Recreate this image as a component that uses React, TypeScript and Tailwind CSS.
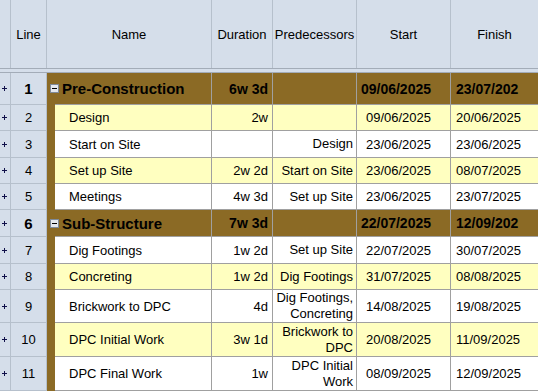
import React from "react";

type Row = {
  line: number;
  group?: boolean;
  name: string;
  dur: string;
  pred: string;
  start: string;
  finish: string;
  yellow?: boolean;
  h: string;
};

const rows: Row[] = [
  { line: 1, group: true, name: "Pre-Construction", dur: "6w 3d", pred: "", start: "09/06/2025", finish: "23/07/202", h: "h-[32px]" },
  { line: 2, name: "Design", dur: "2w", pred: "", start: "09/06/2025", finish: "20/06/2025", yellow: true, h: "h-[26px]" },
  { line: 3, name: "Start on Site", dur: "", pred: "Design", start: "23/06/2025", finish: "23/06/2025", h: "h-[27px]" },
  { line: 4, name: "Set up Site", dur: "2w 2d", pred: "Start on Site", start: "23/06/2025", finish: "08/07/2025", yellow: true, h: "h-[26px]" },
  { line: 5, name: "Meetings", dur: "4w 3d", pred: "Set up Site", start: "23/06/2025", finish: "23/07/2025", h: "h-[26px]" },
  { line: 6, group: true, name: "Sub-Structure", dur: "7w 3d", pred: "", start: "22/07/2025", finish: "12/09/202", h: "h-[27px]" },
  { line: 7, name: "Dig Footings", dur: "1w 2d", pred: "Set up Site", start: "22/07/2025", finish: "30/07/2025", h: "h-[27px]" },
  { line: 8, name: "Concreting", dur: "1w 2d", pred: "Dig Footings", start: "31/07/2025", finish: "08/08/2025", yellow: true, h: "h-[26px]" },
  { line: 9, name: "Brickwork to DPC", dur: "4d", pred: "Dig Footings, Concreting", start: "14/08/2025", finish: "19/08/2025", h: "h-[33px]" },
  { line: 10, name: "DPC Initial Work", dur: "3w 1d", pred: "Brickwork to DPC", start: "20/08/2025", finish: "11/09/2025", yellow: true, h: "h-[34px]" },
  { line: 11, name: "DPC Final Work", dur: "1w", pred: "DPC Initial Work", start: "08/09/2025", finish: "12/09/2025", h: "h-[34px]" },
];

function Plus() {
  return (
    <svg width="5" height="5" viewBox="0 0 5 5" className="block">
      <path d="M0 2.5h5M2.5 0v5" stroke="#10104a" strokeWidth="1" />
    </svg>
  );
}

function Minus() {
  return (
    <div className="-ml-[5px] w-[9px] h-[9px] border border-[#7f8a99] bg-[#e4e8ee] flex items-center justify-center shrink-0">
      <div className="w-[5px] h-px bg-black" />
    </div>
  );
}

export default function App() {
  const cell = "h-full border-r border-b border-[#a0a0a0] flex items-center";
  return (
    <div className="w-[538px] h-[391px] overflow-hidden bg-[#d5deea] font-['Liberation_Sans',Arial,sans-serif] text-[13px] text-black leading-none">
      {/* Header */}
      <div className="flex h-[69px] border-b border-[#a3acb8]">
        <div className="w-[11px] border-r border-[#b6c0cc]" />
        <div className="w-[36px] border-r border-[#b6c0cc] flex items-center justify-center">Line</div>
        <div className="w-[165px] border-r border-[#b6c0cc] flex items-center justify-center">Name</div>
        <div className="w-[61px] border-r border-[#b6c0cc] flex items-center justify-center">Duration</div>
        <div className="w-[84px] border-r border-[#b6c0cc] flex items-center justify-center">Predecessors</div>
        <div className="w-[94px] border-r border-[#b6c0cc] flex items-center justify-center">Start</div>
        <div className="flex-1 flex items-center justify-center">Finish</div>
      </div>
      <div className="h-[4px] border-b border-[#a3acb8]" />

      {/* Rows */}
      {rows.map((r) => {
        const bg = r.group ? "bg-[#8b6a25]" : r.yellow ? "bg-[#ffffc0]" : "bg-white";
        const txt = r.group ? "font-bold text-[14px]" : "";
        return (
          <div key={r.line} className={`flex ${r.h}`}>
            <div className="w-[11px] h-full border-r border-b border-[#b6c0cc] flex items-center justify-center pr-px">
              <Plus />
            </div>
            <div
              className={`w-[36px] h-full border-r border-b border-[#b6c0cc] flex items-center justify-center ${
                r.group ? "font-bold text-[15px]" : ""
              }`}
            >
              {r.line}
            </div>
            <div className="w-[165px] h-full flex">
              <div className="w-[8px] h-full bg-[#8b6a25]" />
              <div className={`flex-1 ${cell} ${bg}`}>
                {r.group ? (
                  <>
                    <Minus />
                    <span className="ml-[3px] font-bold text-[15px]">{r.name}</span>
                  </>
                ) : (
                  <span className="pl-[14px]">{r.name}</span>
                )}
              </div>
            </div>
            <div className={`w-[61px] ${cell} ${bg} justify-end pr-[4px] ${txt}`}>{r.dur}</div>
            <div className={`w-[84px] ${cell} ${bg} justify-end pl-[2px] pr-[3px]`}>
              <span className="text-right leading-[16px]">{r.pred}</span>
            </div>
            <div className={`w-[94px] ${cell} ${bg} justify-end pr-[19px] ${txt}`}>{r.start}</div>
            <div className={`flex-1 h-full border-b border-[#a0a0a0] flex items-center ${bg} pl-[5px] ${txt}`}>
              {r.finish}
            </div>
          </div>
        );
      })}
    </div>
  );
}
